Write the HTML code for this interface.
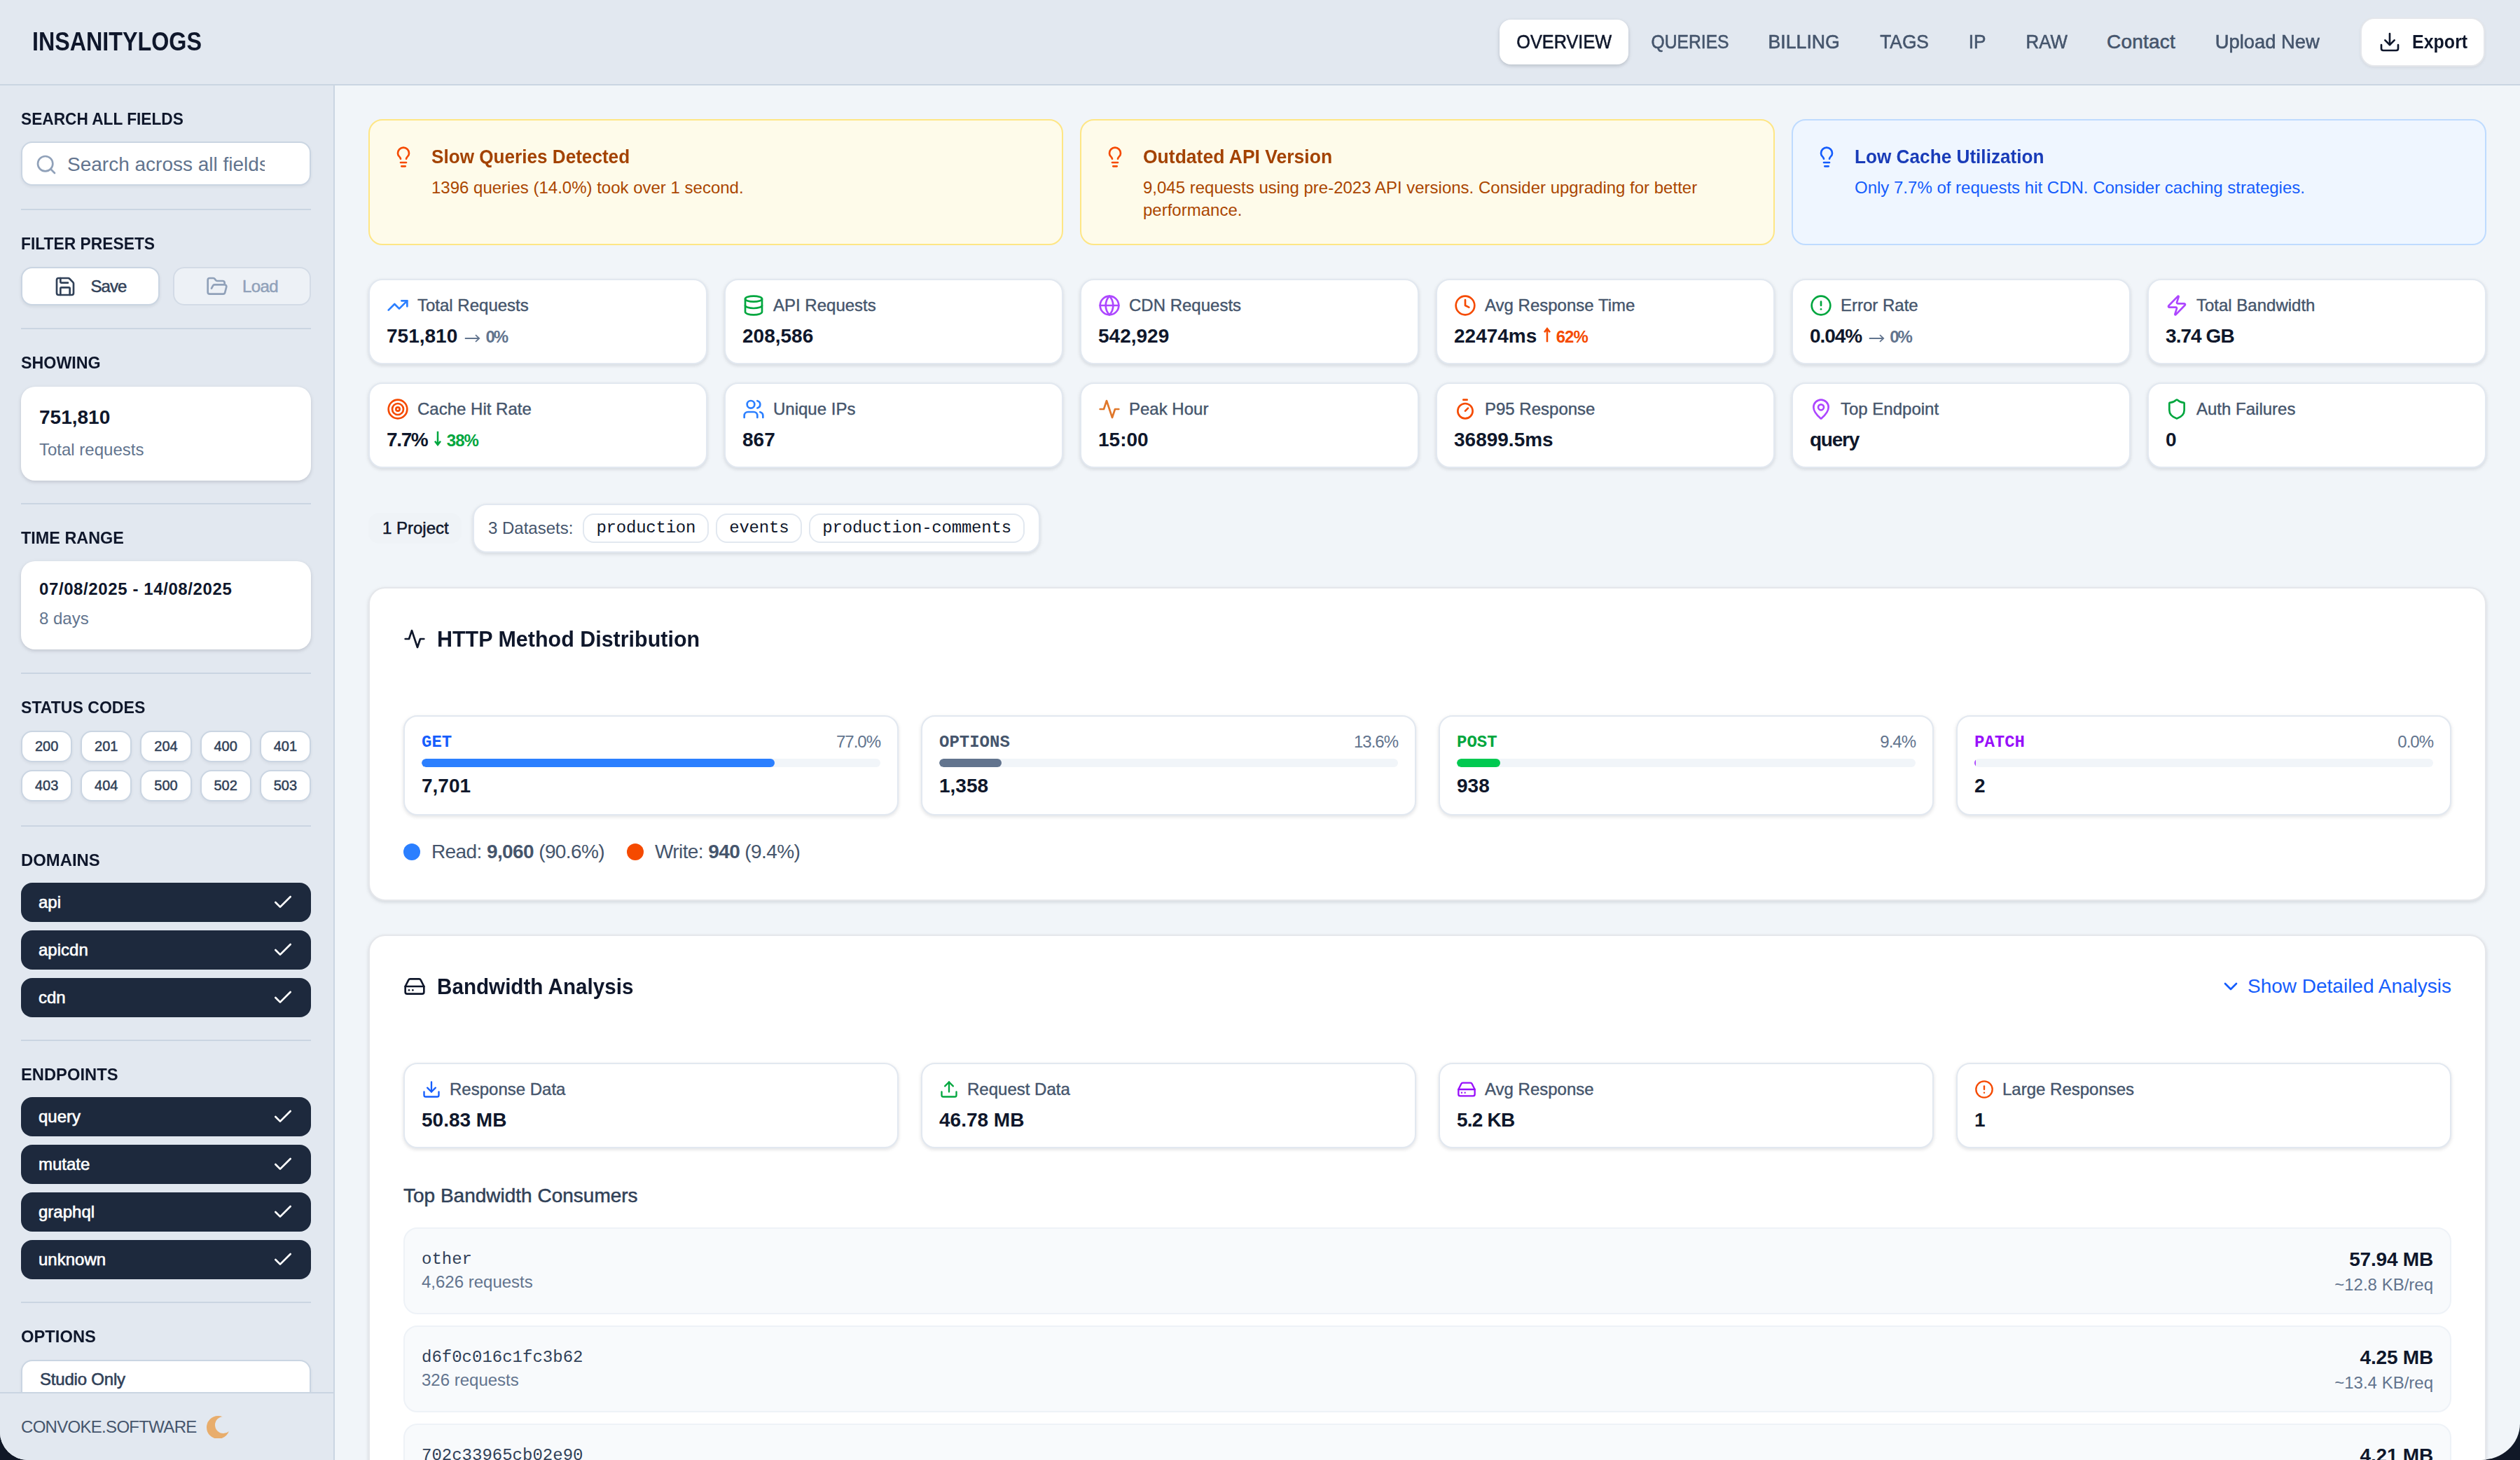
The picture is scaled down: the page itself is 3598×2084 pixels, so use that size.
<!DOCTYPE html>
<html><head><meta charset="utf-8">
<style>
*{box-sizing:border-box;margin:0;padding:0}
html,body{width:3598px;height:2084px;overflow:hidden;background:#111827}
body{font-family:"Liberation Sans",sans-serif;color:#0f172b}
#app{zoom:2;width:1799px;height:1042px;position:relative;overflow:hidden;background:#f1f5f9;border-radius:0 0 28px 20px/0 0 26px 20px}
svg.i{display:block;fill:none;stroke:currentColor;stroke-width:2;stroke-linecap:round;stroke-linejoin:round;flex:none}
.mono{font-family:"Liberation Mono",monospace}
/* header */
#hdr{position:absolute;left:0;top:0;width:1799px;height:61px;background:#e2e8f0;border-bottom:1px solid #cad5e2}
#logo{position:absolute;left:23.2px;top:16px;line-height:28px;font-size:18px;font-weight:700;transform:scaleX(0.896);transform-origin:0 50%;letter-spacing:0;color:#0f172b}
.nav{-webkit-text-stroke:0.3px currentColor;position:absolute;top:14px;height:32px;line-height:32px;font-size:14px;color:#45556c;text-align:center;border-radius:8px;white-space:nowrap}
.nav.act{background:#fff;color:#0f172b;box-shadow:0 1px 3px rgba(15,23,42,.12),0 1px 2px rgba(15,23,42,.08)}
#export{position:absolute;left:1685px;top:12.5px;width:89px;height:35px;background:#fff;border:1px solid #e5e7eb;border-radius:10px;box-shadow:0 1px 2px rgba(0,0,0,.06);display:flex;align-items:center;padding-left:12px;gap:8px;font-size:14px;font-weight:700;color:#0f172b}
/* sidebar */
#side{position:absolute;left:0;top:61px;width:239px;height:981px;background:#e2e8f0;border-right:1px solid #cad5e2;overflow:hidden}
.chip:last-child{margin-bottom:0}
/* main */
#main{position:absolute;left:239px;top:61px;width:1560px;height:981px;overflow:hidden;padding:24px 24px 0 24px}
.alerts{display:grid;grid-template-columns:repeat(3,1fr);gap:12px;margin-bottom:24px}
.al{border:1px solid #fee685;background:#fefbea;border-radius:10px;padding:16px;display:flex;gap:12px}
.al .t{font-size:14px;line-height:20px;font-weight:700;color:#a34200}
.al .d{font-size:12px;line-height:16px;color:#ab4600;margin-top:4px}
.al.blue{border-color:#bedbff;background:#eff6ff}
.al.blue .t{color:#193cb8}
.al.blue .d{color:#155dfc}
.stats{display:grid;grid-template-columns:repeat(6,1fr);column-gap:12px;row-gap:13px;margin-bottom:24px}
.st{background:#fff;border:1px solid #e2e8f0;border-radius:10px;padding:10px 12px;height:61px;box-shadow:0 1px 3px rgba(15,23,42,.08),0 1px 2px rgba(15,23,42,.05)}
.st .l{-webkit-text-stroke:0.2px currentColor;display:flex;align-items:center;gap:6px;height:16px;font-size:12px;color:#45556c;margin-bottom:4px;white-space:nowrap}
.st .v{font-size:14px;line-height:20px;font-weight:700;color:#0f172b;white-space:nowrap}
.proj{display:flex;align-items:center;height:37px;margin-bottom:24px;padding-top:1px}
.panel{background:#fff;border:1px solid #e5e7eb;border-radius:12px;box-shadow:0 1px 3px rgba(15,23,42,.08),0 1px 2px rgba(15,23,42,.05);padding:24px;margin-bottom:24px}
.ph{display:flex;align-items:center;gap:8px;height:24px;font-size:16px;font-weight:700;color:#0f172b}
.g4{display:grid;grid-template-columns:repeat(4,1fr);gap:16px}
.mc{border:1px solid #e2e8f0;border-radius:10px;padding:10px 12px;box-shadow:0 1px 3px rgba(15,23,42,.08),0 1px 2px rgba(15,23,42,.05);background:#fff}
.bar{height:6px;border-radius:3px;background:#f1f5f9;margin:4px 0 3.5px;position:relative;overflow:hidden}
.bar i{position:absolute;left:0;top:0;bottom:0;border-radius:3px;min-width:1px}
.row{background:#f8fafc;border:1px solid #eef2f7;border-radius:10px;padding:12px;display:flex;justify-content:space-between;align-items:center;margin-bottom:8px}

.sh{position:absolute;left:15px;line-height:16px;font-size:12px;font-weight:700;text-transform:uppercase;color:#0f172b;white-space:nowrap}
.dv{position:absolute;left:15px;width:207px;height:1px;background:#cad5e2}
.inp{position:absolute;left:15px;width:207px;height:31.5px;background:#fff;border:1px solid #cad5e2;border-radius:8px;box-shadow:0 1px 2px rgba(15,23,42,.06);overflow:hidden}
.btn{-webkit-text-stroke:0.25px currentColor;position:absolute;height:27.5px;background:#fff;border:1px solid #cad5e2;border-radius:8px;box-shadow:0 1px 2px rgba(15,23,42,.08);display:flex;align-items:center;justify-content:center;gap:10px;font-size:12px;color:#314158}
.btn.dis{background:#edf1f6;border-color:#d3dbe6;color:#90a1b9;box-shadow:none}
.scard{position:absolute;left:15px;width:207px;background:#fff;border-radius:10px;box-shadow:0 1px 3px rgba(15,23,42,.10),0 1px 2px rgba(15,23,42,.06)}
.sc{position:absolute;left:15px;width:207px;display:grid;grid-template-columns:repeat(5,1fr);column-gap:6px;row-gap:5.5px}
.sc div{-webkit-text-stroke:0.25px currentColor;height:22.5px;line-height:20.5px;text-align:center;font-size:10px;color:#314158;background:#fff;border:1px solid #cad5e2;border-radius:8px;box-shadow:0 1px 2px rgba(15,23,42,.06)}
.chips{position:absolute;left:15px;width:207px}
.chip{-webkit-text-stroke:0.3px currentColor;height:28px;background:#1d293d;border-radius:8px;color:#fff;font-size:12px;display:flex;align-items:center;justify-content:space-between;padding:0 12px 0 12.5px;margin-bottom:6px}
#foot{position:absolute;left:0;top:932.5px;width:238px;height:49px;border-top:1px solid #cad5e2;background:#e2e8f0;display:flex;align-items:center;padding-left:15px;gap:8px;font-size:12px;letter-spacing:-.35px;color:#45556c}

.tr{font-size:12px;color:#62748e;margin-left:5px;letter-spacing:-1px;display:inline-flex;align-items:baseline}
.tr svg{display:inline-block;margin-right:3.7px;overflow:visible}
.pj{white-space:nowrap;font-size:12px;color:#0f172b;padding:0 10px 0 10px;height:22px;line-height:22px;margin-right:8px;width:66.5px;border-radius:8px;background:#eff3f7;-webkit-text-stroke:0.25px currentColor}
.ds{display:flex;align-items:center;height:35px;background:#fff;border:1px solid #e2e8f0;border-radius:10px;box-shadow:0 1px 3px rgba(15,23,42,.08),0 1px 2px rgba(15,23,42,.05);padding:0 10px}
.dsl{font-size:12px;color:#45556c;margin-right:7px}
.dc{font-size:12px;line-height:19px;height:21px;color:#0f172b;border:1px solid #e2e8f0;border-radius:8px;padding:0 8.5px;margin-right:5px;background:#fff;letter-spacing:-0.11px}
.dc:last-child{margin-right:0}
.mh{display:flex;justify-content:space-between;align-items:center;height:16px}
.mn{font-size:12px;font-weight:700}
.mp{font-size:12px;color:#62748e;letter-spacing:-0.5px}
.mv{font-size:14px;line-height:20px;font-weight:700;color:#0f172b}
.leg{display:flex;align-items:center;gap:8px;margin-top:16px;height:20px;font-size:14px;color:#45556c;letter-spacing:-0.3px}
.leg b{color:#45556c}
.dot{width:12px;height:12px;border-radius:6px;display:inline-block}
.sda{position:absolute;right:24px;top:24px;height:24px;display:flex;align-items:center;gap:4px;font-size:14px;color:#155dfc}
.tbc{font-size:14px;line-height:20px;color:#314158;margin:24px 0 12.5px;-webkit-text-stroke:0.25px currentColor}
.rn{font-size:12px;line-height:16px;color:#314158}
.rq{font-size:12px;line-height:16px;color:#62748e}
.rs{font-size:14px;line-height:20px;font-weight:700;color:#0f172b;letter-spacing:-0.1px}
.rp{font-size:12px;line-height:16px;color:#62748e}

.sx{display:inline-block;transform-origin:50% 50%}
.sh{transform-origin:0 50%}

@media (max-width:2600px){html,body{width:1799px;height:1042px}#app{zoom:1}}
</style></head>
<body>
<div id="app">

<div id="hdr">
  <div id="logo">INSANITYLOGS</div>
  <div class="nav act" style="left:1070.5px;width:92px;"><span class="sx" style="transform:scaleX(0.903)">OVERVIEW</span></div>
  <div class="nav" style="left:1166.5px;width:80px;"><span class="sx" style="transform:scaleX(0.882)">QUERIES</span></div>
  <div class="nav" style="left:1250.5px;width:75px;"><span class="sx" style="transform:scaleX(0.953)">BILLING</span></div>
  <div class="nav" style="left:1330px;width:59px;"><span class="sx" style="transform:scaleX(0.939)">TAGS</span></div>
  <div class="nav" style="left:1393.5px;width:36px;"><span class="sx" style="transform:scaleX(0.937)">IP</span></div>
  <div class="nav" style="left:1434px;width:54px;"><span class="sx" style="transform:scaleX(0.924)">RAW</span></div>
  <div class="nav" style="left:1492px;width:73px;letter-spacing:0.1px">Contact</div>
  <div class="nav" style="left:1569px;width:99px;"><span class="sx" style="transform:scaleX(0.978)">Upload New</span></div>
  <div id="export"><svg class="i" width="16" height="16" viewBox="0 0 24 24"><path d="M21 15v4a2 2 0 0 1-2 2H5a2 2 0 0 1-2-2v-4"/><polyline points="7 10 12 15 17 10"/><line x1="12" y1="15" x2="12" y2="3"/></svg><span class="sx" style="transform:scaleX(0.893);transform-origin:0 50%">Export</span></div>
</div>
<div id="side">
  <div class="sh" style="top:16px;transform:scaleX(0.945)">Search all fields</div>
  <div class="inp" style="top:40px">
    <svg class="i" width="16" height="16" viewBox="0 0 24 24" style="position:absolute;left:9px;top:7.5px;color:#90a1b9"><circle cx="11" cy="11" r="8"/><path d="m21 21-4.3-4.3"/></svg>
    <div style="position:absolute;left:32px;top:5.5px;width:141px;overflow:hidden;white-space:nowrap;line-height:20px;font-size:14px;color:#62748e">Search across all fields</div>
  </div>
  <div class="dv" style="top:88px"></div>
  <div class="sh" style="top:105px;transform:scaleX(0.951)">Filter presets</div>
  <div class="btn" style="top:129.5px;left:15px;width:99px"><svg class="i" width="16" height="16" viewBox="0 0 24 24"><path d="M15.2 3a2 2 0 0 1 1.4.6l3.8 3.8a2 2 0 0 1 .6 1.4V19a2 2 0 0 1-2 2H5a2 2 0 0 1-2-2V5a2 2 0 0 1 2-2z"/><path d="M17 21v-7a1 1 0 0 0-1-1H8a1 1 0 0 0-1 1v7"/><path d="M7 3v4a1 1 0 0 0 1 1h7"/></svg><span style="letter-spacing:-0.45px">Save</span></div>
  <div class="btn dis" style="top:129.5px;left:123.5px;width:98.5px"><svg class="i" width="16" height="16" viewBox="0 0 24 24"><path d="m6 14 1.5-2.9A2 2 0 0 1 9.24 10H20a2 2 0 0 1 1.94 2.5l-1.54 6a2 2 0 0 1-1.95 1.5H4a2 2 0 0 1-2-2V5a2 2 0 0 1 2-2h3.9a2 2 0 0 1 1.69.9l.81 1.2a2 2 0 0 0 1.67.9H18a2 2 0 0 1 2 2v2"/></svg><span style="letter-spacing:-0.3px">Load</span></div>
  <div class="dv" style="top:173px"></div>
  <div class="sh" style="top:190px;transform:scaleX(0.969)">Showing</div>
  <div class="scard" style="top:215px;height:67px">
    <div style="position:absolute;left:13px;top:12px;line-height:20px;font-size:14px;font-weight:700;color:#0f172b">751,810</div>
    <div style="position:absolute;left:13px;top:37px;line-height:16px;font-size:12px;color:#62748e">Total requests</div>
  </div>
  <div class="dv" style="top:298px"></div>
  <div class="sh" style="top:315px;transform:scaleX(0.975)">Time range</div>
  <div class="scard" style="top:339.5px;height:63px">
    <div style="position:absolute;left:13px;top:12px;line-height:16px;font-size:12px;font-weight:700;color:#0f172b;letter-spacing:0.3px">07/08/2025 - 14/08/2025</div>
    <div style="position:absolute;left:13px;top:33px;line-height:16px;font-size:12px;color:#62748e">8 days</div>
  </div>
  <div class="dv" style="top:419px"></div>
  <div class="sh" style="top:436px;transform:scaleX(0.961)">Status codes</div>
  <div class="sc" style="top:460.5px">
    <div>200</div><div>201</div><div>204</div><div>400</div><div>401</div>
    <div>403</div><div>404</div><div>500</div><div>502</div><div>503</div>
  </div>
  <div class="dv" style="top:528px"></div>
  <div class="sh" style="top:545px;transform:scaleX(0.995)">Domains</div>
  <div class="chips" style="top:569px">
    <div class="chip">api<svg class="i" width="16" height="16" viewBox="0 0 24 24"><path d="M20 6 9 17l-5-5"/></svg></div>
    <div class="chip">apicdn<svg class="i" width="16" height="16" viewBox="0 0 24 24"><path d="M20 6 9 17l-5-5"/></svg></div>
    <div class="chip">cdn<svg class="i" width="16" height="16" viewBox="0 0 24 24"><path d="M20 6 9 17l-5-5"/></svg></div>
  </div>
  <div class="dv" style="top:681px"></div>
  <div class="sh" style="top:698px;transform:scaleX(0.989)">Endpoints</div>
  <div class="chips" style="top:722px">
    <div class="chip">query<svg class="i" width="16" height="16" viewBox="0 0 24 24"><path d="M20 6 9 17l-5-5"/></svg></div>
    <div class="chip">mutate<svg class="i" width="16" height="16" viewBox="0 0 24 24"><path d="M20 6 9 17l-5-5"/></svg></div>
    <div class="chip">graphql<svg class="i" width="16" height="16" viewBox="0 0 24 24"><path d="M20 6 9 17l-5-5"/></svg></div>
    <div class="chip">unknown<svg class="i" width="16" height="16" viewBox="0 0 24 24"><path d="M20 6 9 17l-5-5"/></svg></div>
  </div>
  <div class="dv" style="top:868px"></div>
  <div class="sh" style="top:885px;transform:scaleX(0.99)">Options</div>
  <div class="inp" style="top:909.5px;height:40px"><div style="position:absolute;left:12.5px;top:5px;line-height:16px;font-size:12px;color:#314158;letter-spacing:-0.1px;-webkit-text-stroke:0.3px currentColor">Studio Only</div></div>
  <div id="foot"><span>CONVOKE.SOFTWARE</span><svg width="16.4" height="16.4" viewBox="0 0 16.4 16.4" style="margin-left:-1px"><defs><mask id="mm"><rect width="17" height="17" fill="#fff"/><circle cx="12" cy="6.5" r="6" fill="#000"/></mask></defs><circle cx="8.2" cy="8.2" r="8.2" fill="#e8ad6c" mask="url(#mm)"/></svg></div>
</div>

<div id="main">
  <div class="alerts">
    <div class="al"><svg class="i" width="16" height="16" viewBox="0 0 24 24" style="color:#f54a00;margin-top:2px"><path d="M15 14c.2-1 .7-1.7 1.5-2.5 1-.9 1.5-2.2 1.5-3.5A6 6 0 0 0 6 8c0 1 .2 2.2 1.5 3.5.7.7 1.3 1.5 1.5 2.5"/><path d="M9 18h6"/><path d="M10 22h4"/></svg><div><div class="t" style="transform:scaleX(0.933);transform-origin:0 50%">Slow Queries Detected</div><div class="d">1396 queries (14.0%) took over 1 second.</div></div></div>
    <div class="al"><svg class="i" width="16" height="16" viewBox="0 0 24 24" style="color:#f54a00;margin-top:2px"><path d="M15 14c.2-1 .7-1.7 1.5-2.5 1-.9 1.5-2.2 1.5-3.5A6 6 0 0 0 6 8c0 1 .2 2.2 1.5 3.5.7.7 1.3 1.5 1.5 2.5"/><path d="M9 18h6"/><path d="M10 22h4"/></svg><div><div class="t" style="transform:scaleX(0.947);transform-origin:0 50%">Outdated API Version</div><div class="d">9,045 requests using pre-2023 API versions. Consider upgrading for better performance.</div></div></div>
    <div class="al blue"><svg class="i" width="16" height="16" viewBox="0 0 24 24" style="color:#155dfc;margin-top:2px"><path d="M15 14c.2-1 .7-1.7 1.5-2.5 1-.9 1.5-2.2 1.5-3.5A6 6 0 0 0 6 8c0 1 .2 2.2 1.5 3.5.7.7 1.3 1.5 1.5 2.5"/><path d="M9 18h6"/><path d="M10 22h4"/></svg><div><div class="t" style="transform:scaleX(0.935);transform-origin:0 50%">Low Cache Utilization</div><div class="d">Only 7.7% of requests hit CDN. Consider caching strategies.</div></div></div>
  </div>
  <div class="stats"><div class="st"><div class="l"><svg class="i" width="16" height="16" viewBox="0 0 24 24" style="color:#2b7fff;"><polyline points="22 7 13.5 15.5 8.5 10.5 2 17"/><polyline points="16 7 22 7 22 13"/></svg><span>Total Requests</span></div><div class="v">751,810<small class="tr"><svg width="11.4" height="6" viewBox="0 0 11.4 6" style="vertical-align:0.5px"><path d="M0.4 3h10.4M8 0.6 10.6 3 8 5.4" fill="none" stroke="currentColor" stroke-width="0.9"/></svg><span>0%</span></small></div></div><div class="st"><div class="l"><svg class="i" width="16" height="16" viewBox="0 0 24 24" style="color:#00a63e;"><ellipse cx="12" cy="5" rx="9" ry="3"/><path d="M3 5V19A9 3 0 0 0 21 19V5"/><path d="M3 12A9 3 0 0 0 21 12"/></svg><span>API Requests</span></div><div class="v">208,586</div></div><div class="st"><div class="l"><svg class="i" width="16" height="16" viewBox="0 0 24 24" style="color:#ad46ff;"><circle cx="12" cy="12" r="10"/><path d="M12 2a14.5 14.5 0 0 0 0 20 14.5 14.5 0 0 0 0-20"/><path d="M2 12h20"/></svg><span>CDN Requests</span></div><div class="v">542,929</div></div><div class="st"><div class="l"><svg class="i" width="16" height="16" viewBox="0 0 24 24" style="color:#f54a00;"><circle cx="12" cy="12" r="10"/><polyline points="12 6 12 12 16 14"/></svg><span>Avg Response Time</span></div><div class="v">22474ms<small class="tr" style="color:#f54a00"><svg width="5" height="11" viewBox="0 0 5 11" style="vertical-align:-2.8px"><path d="M2.5 10.6V1.2M0.5 3.6 2.5 1 4.5 3.6" fill="none" stroke="currentColor" stroke-width="1.25"/></svg><b style="letter-spacing:-0.5px">62%</b></small></div></div><div class="st"><div class="l"><svg class="i" width="16" height="16" viewBox="0 0 24 24" style="color:#00a63e;"><circle cx="12" cy="12" r="10"/><line x1="12" y1="8" x2="12" y2="12"/><line x1="12" y1="16" x2="12.01" y2="16"/></svg><span>Error Rate</span></div><div class="v"><span style="letter-spacing:-0.54px">0.04%</span><small class="tr"><svg width="11.4" height="6" viewBox="0 0 11.4 6" style="vertical-align:0.5px"><path d="M0.4 3h10.4M8 0.6 10.6 3 8 5.4" fill="none" stroke="currentColor" stroke-width="0.9"/></svg><span>0%</span></small></div></div><div class="st"><div class="l"><svg class="i" width="16" height="16" viewBox="0 0 24 24" style="color:#ad46ff;"><path d="M4 14a1 1 0 0 1-.78-1.63l9.9-10.2a.5.5 0 0 1 .86.46l-1.92 6.02A1 1 0 0 0 13 10h7a1 1 0 0 1 .78 1.63l-9.9 10.2a.5.5 0 0 1-.86-.46l1.92-6.02A1 1 0 0 0 11 14z"/></svg><span>Total Bandwidth</span></div><div class="v" style="letter-spacing:-0.47px">3.74 GB</div></div><div class="st"><div class="l"><svg class="i" width="16" height="16" viewBox="0 0 24 24" style="color:#f54a00;"><circle cx="12" cy="12" r="10"/><circle cx="12" cy="12" r="6"/><circle cx="12" cy="12" r="2"/></svg><span>Cache Hit Rate</span></div><div class="v"><span style="letter-spacing:-0.68px">7.7%</span><small class="tr" style="color:#00a63e"><svg width="5" height="11" viewBox="0 0 5 11" style="vertical-align:-2.8px"><path d="M2.5 0.4V9.8M0.5 7.4 2.5 10 4.5 7.4" fill="none" stroke="currentColor" stroke-width="1.25"/></svg><b style="letter-spacing:-0.5px">38%</b></small></div></div><div class="st"><div class="l"><svg class="i" width="16" height="16" viewBox="0 0 24 24" style="color:#2b7fff;"><path d="M16 21v-2a4 4 0 0 0-4-4H6a4 4 0 0 0-4 4v2"/><circle cx="9" cy="7" r="4"/><path d="M22 21v-2a4 4 0 0 0-3-3.87"/><path d="M16 3.13a4 4 0 0 1 0 7.75"/></svg><span>Unique IPs</span></div><div class="v">867</div></div><div class="st"><div class="l"><svg class="i" width="16" height="16" viewBox="0 0 24 24" style="color:#e0772a;"><path d="M22 12h-4l-3 9L9 3l-3 9H2"/></svg><span>Peak Hour</span></div><div class="v">15:00</div></div><div class="st"><div class="l"><svg class="i" width="16" height="16" viewBox="0 0 24 24" style="color:#f54a00;"><line x1="10" y1="2" x2="14" y2="2"/><line x1="12" y1="14" x2="15" y2="11"/><circle cx="12" cy="14" r="8"/></svg><span>P95 Response</span></div><div class="v">36899.5ms</div></div><div class="st"><div class="l"><svg class="i" width="16" height="16" viewBox="0 0 24 24" style="color:#ad46ff;"><path d="M20 10c0 4.993-5.539 10.193-7.399 11.799a1 1 0 0 1-1.202 0C9.539 20.193 4 14.993 4 10a8 8 0 0 1 16 0"/><circle cx="12" cy="10" r="3"/></svg><span>Top Endpoint</span></div><div class="v" style="letter-spacing:-0.62px">query</div></div><div class="st"><div class="l"><svg class="i" width="16" height="16" viewBox="0 0 24 24" style="color:#00a63e;"><path d="M20 13c0 5-3.5 7.5-7.66 8.95a1 1 0 0 1-.67-.01C7.5 20.5 4 18 4 13V6a1 1 0 0 1 1-1c2 0 4.5-1.2 6.24-2.72a1.17 1.17 0 0 1 1.52 0C14.51 3.81 17 5 19 5a1 1 0 0 1 1 1z"/></svg><span>Auth Failures</span></div><div class="v">0</div></div></div>
  <div class="proj">
    <div class="pj">1 Project</div>
    <div class="ds"><span class="dsl">3 Datasets:</span><span class="mono dc">production</span><span class="mono dc">events</span><span class="mono dc">production-comments</span></div>
  </div>
  <div class="panel" style="height:224px">
    <div class="ph"><svg class="i" width="16" height="16" viewBox="0 0 24 24" style="color:#0f172b;"><path d="M22 12h-4l-3 9L9 3l-3 9H2"/></svg><span class="sx" style="transform:scaleX(0.952);transform-origin:0 50%">HTTP Method Distribution</span></div>
    <div class="g4" style="margin-top:42.5px">
      <div class="mc"><div class="mh"><span class="mono mn" style="color:#155dfc">GET</span><span class="mp">77.0%</span></div><div class="bar"><i style="width:77.0%;background:#2b7fff"></i></div><div class="mv">7,701</div></div>
      <div class="mc"><div class="mh"><span class="mono mn" style="color:#45556c">OPTIONS</span><span class="mp">13.6%</span></div><div class="bar"><i style="width:13.6%;background:#62748e"></i></div><div class="mv">1,358</div></div>
      <div class="mc"><div class="mh"><span class="mono mn" style="color:#00a63e">POST</span><span class="mp">9.4%</span></div><div class="bar"><i style="width:9.4%;background:#00c950"></i></div><div class="mv">938</div></div>
      <div class="mc"><div class="mh"><span class="mono mn" style="color:#9810fa">PATCH</span><span class="mp">0.0%</span></div><div class="bar"><i style="width:0.0%;background:#ad46ff"></i></div><div class="mv">2</div></div>
    </div>
    <div class="leg">
      <span class="dot" style="background:#2b7fff"></span><span>Read: <b>9,060</b> (90.6%)</span>
      <span class="dot" style="background:#f54a00;margin-left:8px"></span><span>Write: <b>940</b> (9.4%)</span>
    </div>
  </div>
  <div class="panel" style="position:relative">
    <div class="ph"><svg class="i" width="16" height="16" viewBox="0 0 24 24" style="color:#0f172b;"><line x1="22" y1="12" x2="2" y2="12"/><path d="M5.45 5.11 2 12v6a2 2 0 0 0 2 2h16a2 2 0 0 0 2-2v-6l-3.45-6.89A2 2 0 0 0 16.76 4H7.24a2 2 0 0 0-1.79 1.11z"/><line x1="6" y1="16" x2="6.01" y2="16"/><line x1="10" y1="16" x2="10.01" y2="16"/></svg><span class="sx" style="transform:scaleX(0.926);transform-origin:0 50%">Bandwidth Analysis</span></div>
    <div class="sda"><svg class="i" width="16" height="16" viewBox="0 0 24 24" style="color:#155dfc;"><path d="m6 9 6 6 6-6"/></svg><span>Show Detailed Analysis</span></div>
    <div class="g4" style="margin-top:42.5px">
      <div class="st bws"><div class="l"><svg class="i" width="14" height="14" viewBox="0 0 24 24" style="color:#155dfc;"><path d="M21 15v4a2 2 0 0 1-2 2H5a2 2 0 0 1-2-2v-4"/><polyline points="7 10 12 15 17 10"/><line x1="12" y1="15" x2="12" y2="3"/></svg><span>Response Data</span></div><div class="v">50.83 MB</div></div>
      <div class="st bws"><div class="l"><svg class="i" width="14" height="14" viewBox="0 0 24 24" style="color:#00a63e;"><path d="M21 15v4a2 2 0 0 1-2 2H5a2 2 0 0 1-2-2v-4"/><polyline points="17 8 12 3 7 8"/><line x1="12" y1="3" x2="12" y2="15"/></svg><span>Request Data</span></div><div class="v">46.78 MB</div></div>
      <div class="st bws"><div class="l"><svg class="i" width="14" height="14" viewBox="0 0 24 24" style="color:#9810fa;"><line x1="22" y1="12" x2="2" y2="12"/><path d="M5.45 5.11 2 12v6a2 2 0 0 0 2 2h16a2 2 0 0 0 2-2v-6l-3.45-6.89A2 2 0 0 0 16.76 4H7.24a2 2 0 0 0-1.79 1.11z"/><line x1="6" y1="16" x2="6.01" y2="16"/><line x1="10" y1="16" x2="10.01" y2="16"/></svg><span>Avg Response</span></div><div class="v" style="letter-spacing:-0.4px">5.2 KB</div></div>
      <div class="st bws"><div class="l"><svg class="i" width="14" height="14" viewBox="0 0 24 24" style="color:#f54a00;"><circle cx="12" cy="12" r="10"/><line x1="12" y1="8" x2="12" y2="12"/><line x1="12" y1="16" x2="12.01" y2="16"/></svg><span>Large Responses</span></div><div class="v">1</div></div>
    </div>
    <div class="tbc">Top Bandwidth Consumers</div>
    <div class="row"><div><div class="mono rn">other</div><div class="rq">4,626 requests</div></div><div style="text-align:right"><div class="rs">57.94 MB</div><div class="rp">~12.8 KB/req</div></div></div>
    <div class="row"><div><div class="mono rn">d6f0c016c1fc3b62</div><div class="rq">326 requests</div></div><div style="text-align:right"><div class="rs">4.25 MB</div><div class="rp">~13.4 KB/req</div></div></div>
    <div class="row"><div><div class="mono rn">702c33965cb02e90</div><div class="rq">313 requests</div></div><div style="text-align:right"><div class="rs">4.21 MB</div><div class="rp">~13.8 KB/req</div></div></div>
  </div>
</div>
</div>
</body></html>
